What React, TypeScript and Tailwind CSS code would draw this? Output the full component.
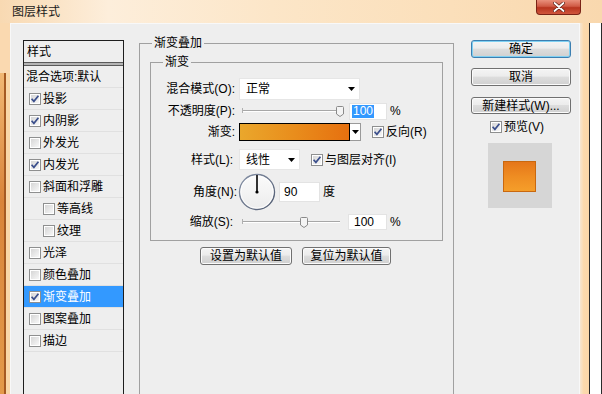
import React from "react";

function Check({ checked }: { checked?: boolean }) {
  return (
    <svg width="12" height="12" viewBox="0 0 12 12" className="shrink-0 block">
      <defs>
        <linearGradient id="cbg" x1="0" y1="0" x2="1" y2="1">
          <stop offset="0" stopColor="#d6d6d6" />
          <stop offset="1" stopColor="#f7f7f7" />
        </linearGradient>
      </defs>
      <rect x="0.5" y="0.5" width="11" height="11" fill="#ffffff" stroke="#8e8f8f" />
      <rect x="2" y="2" width="8" height="8" fill="url(#cbg)" />
      {checked && (
        <path d="M2.6 5.8 L4.9 8.4 L9.4 2.8" stroke="#3b4f8c" strokeWidth="1.7" fill="none" />
      )}
    </svg>
  );
}

function Arrow() {
  return (
    <svg width="7" height="4" viewBox="0 0 7 4" className="block shrink-0">
      <path d="M0 0 H7 L3.5 4 Z" fill="#000" />
    </svg>
  );
}

function Slider({ pos, width }: { pos: number; width: number }) {
  return (
    <div className="relative h-[18px] shrink-0" style={{ width }}>
      <div className="absolute left-[3px] right-[3px] top-[8px] h-[2px] border-t border-[#a7a7a7] border-b border-b-white" />
      <div className="absolute left-[3px] top-[6px] h-[5px] w-px bg-[#b0b0b0]" />
      <svg
        width="8"
        height="11"
        viewBox="0 0 8 11"
        className="absolute top-[4px]"
        style={{ left: pos }}
      >
        <path
          d="M1.5 0.5 H6.5 Q7.5 0.5 7.5 1.5 V8 L4 10.5 L0.5 8 V1.5 Q0.5 0.5 1.5 0.5 Z"
          fill="#f4f4f4"
          stroke="#8a8a8a"
        />
      </svg>
    </div>
  );
}

const items: { t: string; c?: boolean; i?: boolean; s?: boolean }[] = [
  { t: "投影", c: true },
  { t: "内阴影", c: true },
  { t: "外发光" },
  { t: "内发光", c: true },
  { t: "斜面和浮雕" },
  { t: "等高线", i: true },
  { t: "纹理", i: true },
  { t: "光泽" },
  { t: "颜色叠加" },
  { t: "渐变叠加", c: true, s: true },
  { t: "图案叠加" },
  { t: "描边" },
];

const btn =
  "flex items-center justify-center rounded-[3px] border border-[#707070] bg-[linear-gradient(to_bottom,#f4f4f4,#ececec_45%,#dddddd_50%,#d0d0d0)] text-[12px] leading-[14px] text-black shadow-[inset_0_0_0_1px_#fbfbfb]";

export default function App() {
  return (
    <div className="w-[602px] h-[394px] overflow-hidden flex flex-col bg-[#fbe1bf] font-['Liberation_Sans','Noto_Sans_CJK_SC',sans-serif] text-black">
      {/* title bar */}
      <div className="h-[23px] shrink-0 flex items-start bg-[linear-gradient(to_right,#f8d9b2,#fdeedb_18%,#fce6c8_45%,#fbdfba_75%,#f9d8ae)]">
        <span className="ml-[12px] mt-[4px] text-[12px] leading-[16px] text-[#1a1a1a]">图层样式</span>
        <div className="ml-auto mr-[21px] w-[45px] h-[15px] rounded-b-[4px] border border-t-0 border-[#7a2316] bg-[linear-gradient(to_bottom,#e9907c,#d05a45_45%,#b8341f_55%,#d0563c)] flex items-center justify-center">
          <svg width="12" height="10" viewBox="0 0 12 10">
            <path d="M1.5 1 L10.5 9 M10.5 1 L1.5 9" stroke="#5a1a10" strokeWidth="3.2" strokeLinecap="round" />
            <path d="M1.5 1 L10.5 9 M10.5 1 L1.5 9" stroke="#ffffff" strokeWidth="1.8" strokeLinecap="round" />
          </svg>
        </div>
      </div>

      <div className="flex flex-1 min-h-0">
        {/* left frame */}
        <div className="w-[10px] shrink-0 flex flex-col">
          <div className="h-[50px] bg-[#fad9b0]" />
          <div className="flex-1 flex bg-[linear-gradient(to_bottom,#f3c48a,#e9a250_30%,#e49a48)]">
            <div className="w-[4px] bg-[linear-gradient(to_bottom,#f1b874,#d9843a_40%,#e39a4a)]" />
            <div className="w-[2px] bg-[#a55a22]" />
            <div className="w-[4px] bg-[#f9d7a8]" />
          </div>
        </div>

        {/* dialog body */}
        <div className="w-[570px] shrink-0 bg-[#eeeeee] border-t border-l border-r border-[#f8f8f8] flex items-start">
          {/* left list */}
          <div className="ml-[12px] mt-[16px] w-[101px] h-[400px] shrink-0 border border-[#1e1e1e] bg-[#eeeeee] text-[12px]">
            <div className="h-[21px] flex items-center pl-[3px] leading-[14px]">样式</div>
            <div className="h-[4px] border-y border-[#5a5a5a] bg-[#b4b4b4]" />
            <div className="h-[22px] flex items-center pl-[2px] border-b border-[#e0e0e0] leading-[14px]">混合选项:默认</div>
            {items.map((it) => (
              <div
                key={it.t}
                className={
                  "h-[22px] flex items-center border-b border-[#e0e0e0] leading-[14px] gap-[2px] " +
                  (it.i ? "pl-[19px] " : "pl-[5px] ") +
                  (it.s ? "bg-[#3399ff] text-white" : "")
                }
              >
                <Check checked={it.c} />
                <span>{it.t}</span>
              </div>
            ))}
          </div>

          {/* middle */}
          <div className="ml-[15px] mt-[11px] w-[315px] shrink-0 flex flex-col">
            <fieldset className="w-[315px] h-[420px] border border-[#a0a0a0] text-[12px]">
              <legend className="ml-[12px] px-[2px] leading-[16px]">渐变叠加</legend>
              <fieldset className="ml-[10px] mt-[3px] w-[293px] border border-[#a0a0a0] pb-[10px]">
                <legend className="ml-[12px] px-[2px] leading-[16px]">渐变</legend>

                {/* blend mode */}
                <div className="mt-[8px] h-[22px] flex items-center">
                  <div className="w-[84px] text-right leading-[14px]">混合模式(O):</div>
                  <div className="ml-[4px] w-[121px] h-[22px] bg-white border border-[#e6e6e6] flex items-center pl-[6px] pr-[4px] leading-[14px]">
                    <span>正常</span>
                    <span className="ml-auto">
                      <Arrow />
                    </span>
                  </div>
                </div>

                {/* opacity */}
                <div className="mt-[2px] h-[18px] flex items-center">
                  <div className="w-[84px] text-right leading-[14px]">不透明度(P):</div>
                  <div className="ml-[4px]">
                    <Slider pos={97} width={105} />
                  </div>
                  <div className="ml-[5px] w-[38px] h-[17px] bg-white border border-[#e3e3e3] flex items-center pl-[2px]">
                    <span className="bg-[#3399ff] text-white leading-[13px] px-px">100</span>
                  </div>
                  <span className="ml-[3px] leading-[14px]">%</span>
                </div>

                {/* gradient */}
                <div className="mt-[2px] h-[19px] flex items-center">
                  <div className="w-[84px] text-right leading-[14px]">渐变:</div>
                  <div className="ml-[4px] w-[111px] h-[18px] border border-black bg-[linear-gradient(to_right,#eaa72c,#e98d1c_50%,#e6700f)]" />
                  <div className="w-[11px] h-[18px] bg-white border border-l-0 border-[#9a9a9a] flex items-center justify-center">
                    <Arrow />
                  </div>
                  <div className="ml-[11px]">
                    <Check checked />
                  </div>
                  <span className="ml-[2px] leading-[14px]">反向(R)</span>
                </div>

                {/* style */}
                <div className="mt-[8px] h-[21px] flex items-center">
                  <div className="w-[84px] text-right leading-[14px] pr-[2px]">样式(L):</div>
                  <div className="ml-[4px] w-[61px] h-[21px] bg-white border border-[#e6e6e6] flex items-center pl-[6px] pr-[4px] leading-[14px]">
                    <span>线性</span>
                    <span className="ml-auto">
                      <Arrow />
                    </span>
                  </div>
                  <div className="ml-[11px]">
                    <Check checked />
                  </div>
                  <span className="ml-[2px] leading-[14px]">与图层对齐(I)</span>
                </div>

                {/* angle */}
                <div className="mt-[3px] h-[37px] flex items-center">
                  <div className="w-[86px] text-right leading-[14px]">角度(N):</div>
                  <svg width="38" height="38" viewBox="0 0 38 38" className="ml-[1px] shrink-0 block">
                    <defs>
                      <linearGradient id="dialf" x1="0" y1="0" x2="0" y2="1">
                        <stop offset="0" stopColor="#fbfbfb" />
                        <stop offset="1" stopColor="#ececec" />
                      </linearGradient>
                      <linearGradient id="dials" x1="0" y1="0" x2="1" y2="1">
                        <stop offset="0" stopColor="#8893a8" />
                        <stop offset="1" stopColor="#4f5a70" />
                      </linearGradient>
                    </defs>
                    <circle cx="19" cy="19" r="17.5" fill="url(#dialf)" stroke="url(#dials)" strokeWidth="1.4" />
                    <circle cx="19" cy="19" r="16.2" fill="none" stroke="#ffffff" strokeWidth="0.8" />
                    <line x1="19" y1="19" x2="19" y2="2" stroke="#000" strokeWidth="1.6" />
                    <circle cx="19" cy="19" r="1.6" fill="#000" />
                  </svg>
                  <div className="ml-[3px] w-[41px] h-[20px] bg-white border border-[#e3e3e3] flex items-center pl-[4px] leading-[14px]">
                    90
                  </div>
                  <span className="ml-[3px] leading-[14px]">度</span>
                </div>

                {/* scale */}
                <div className="mt-[4px] h-[16px] flex items-center">
                  <div className="w-[84px] text-right leading-[14px] pr-[2px]">缩放(S):</div>
                  <div className="ml-[4px]">
                    <Slider pos={61} width={104} />
                  </div>
                  <div className="ml-[5px] w-[39px] h-[16px] bg-white border border-[#e3e3e3] flex items-center pl-[5px] leading-[14px]">
                    100
                  </div>
                  <span className="ml-[3px] leading-[14px]">%</span>
                </div>
              </fieldset>

              <div className="mt-[6px] ml-[60px] flex gap-[10px]">
                <div className={btn + " w-[92px] h-[18px]"}>设置为默认值</div>
                <div className={btn + " w-[89px] h-[18px]"}>复位为默认值</div>
              </div>
            </fieldset>
          </div>

          {/* right column */}
          <div className="ml-[17px] mt-[16px] w-[100px] shrink-0 flex flex-col text-[12px]">
            <div className="flex items-center justify-center h-[18px] rounded-[3px] border border-[#3c7fb1] bg-[linear-gradient(to_bottom,#f4f4f4,#ececec_45%,#dddddd_50%,#d0d0d0)] shadow-[inset_0_0_0_1px_#7fd0f2] leading-[14px]">
              确定
            </div>
            <div className={btn + " mt-[10px] h-[18px]"}>取消</div>
            <div className={btn + " mt-[11px] h-[17px]"}>新建样式(W)...</div>
            <div className="mt-[5px] h-[16px] flex items-center pl-[19px] gap-[2px] leading-[14px]">
              <Check checked />
              <span>预览(V)</span>
            </div>
            <div className="mt-[8px] ml-[17px] w-[64px] h-[65px] bg-[#d6d6d6] pt-[18px] pl-[15px]">
              <div className="w-[33px] h-[31px] border border-[#c9680f] bg-[linear-gradient(to_bottom,#e5761a,#ef8d22_50%,#f59e2a)]" />
            </div>
          </div>
        </div>

        {/* right frame */}
        <div className="w-[9px] shrink-0 bg-[linear-gradient(to_right,#f6e6d2,#fbd9ad_40%,#fad6a8)]" />
        <div className="w-px shrink-0 bg-[#2b2b2b]" />
        <div className="w-[11px] shrink-0 bg-white" />
        <div className="w-px shrink-0 bg-[#2b2b2b]" />
      </div>
    </div>
  );
}
